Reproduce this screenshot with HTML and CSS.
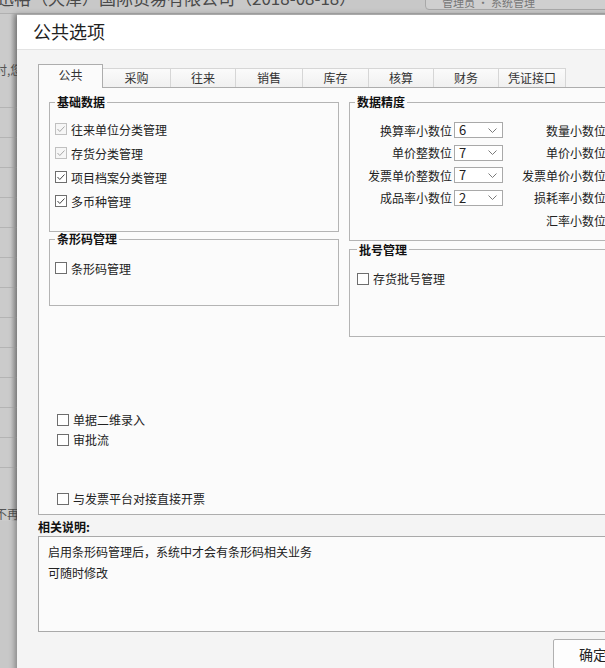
FILE: index.html
```html
<!DOCTYPE html>
<html>

<head>
    <meta charset="utf-8">
    <link rel="stylesheet" href="styles.css">
</head>

<body>
    <div class="app">
        <div class="app-top">
            <span class="company">迅裕（天津）国际贸易有限公司（2018-08-18）</span>
            <div class="user-box">管理员 · 系统管理</div>
        </div>
        <div class="app-side">
            <div class="side-head"><span class="side-text">时,您</span></div>
            <div class="side-row"></div>
            <div class="side-row"></div>
            <div class="side-row"></div>
            <div class="side-row"></div>
            <div class="side-row"></div>
            <div class="side-row"></div>
            <div class="side-row"></div>
            <div class="side-row"></div>
            <div class="side-row"></div>
            <div class="side-row"></div>
            <div class="side-row"></div>
            <div class="side-row"></div>
            <div class="side-foot"><span class="side-text">不再</span></div>
        </div>
    </div>

    <div class="dialog">
        <div class="dlg-title">公共选项</div>
        <div class="dlg-body">
            <div class="tabs">
                <div class="tab active w64">公共</div>
                <div class="tab w68">采购</div>
                <div class="tab w65">往来</div>
                <div class="tab w67">销售</div>
                <div class="tab w66">库存</div>
                <div class="tab w65">核算</div>
                <div class="tab w65">财务</div>
                <div class="tab w67">凭证接口</div>
            </div>
            <div class="tab-panel">
                <div class="cols">
                    <div class="col-left">
                        <fieldset class="group g-basic">
                            <legend>基础数据</legend>
                            <label class="chk disabled"><span class="box"><svg width="10" height="10" viewBox="0 0 10 10"><polyline points="1.5,5 3.8,7.5 8.5,2.5" /></svg></span>往来单位分类管理</label>
                            <label class="chk disabled"><span class="box"><svg width="10" height="10" viewBox="0 0 10 10"><polyline points="1.5,5 3.8,7.5 8.5,2.5" /></svg></span>存货分类管理</label>
                            <label class="chk"><span class="box"><svg width="10" height="10" viewBox="0 0 10 10"><polyline points="1.5,5 3.8,7.5 8.5,2.5" /></svg></span>项目档案分类管理</label>
                            <label class="chk"><span class="box"><svg width="10" height="10" viewBox="0 0 10 10"><polyline points="1.5,5 3.8,7.5 8.5,2.5" /></svg></span>多币种管理</label>
                        </fieldset>
                        <fieldset class="group g-barcode">
                            <legend>条形码管理</legend>
                            <label class="chk"><span class="box"></span>条形码管理</label>
                        </fieldset>
                    </div>
                    <div class="col-right">
                        <fieldset class="group g-precision">
                            <legend>数据精度</legend>
                            <div class="prec-grid">
                                <span class="lbl">换算率小数位</span>
                                <span class="sel">6<svg width="9" height="5" viewBox="0 0 9 5"><polyline points="0.5,0.5 4.5,4.5 8.5,0.5" /></svg></span>
                                <span class="lbl">数量小数位</span>

                                <span class="lbl">单价整数位</span>
                                <span class="sel">7<svg width="9" height="5" viewBox="0 0 9 5"><polyline points="0.5,0.5 4.5,4.5 8.5,0.5" /></svg></span>
                                <span class="lbl">单价小数位</span>

                                <span class="lbl">发票单价整数位</span>
                                <span class="sel">7<svg width="9" height="5" viewBox="0 0 9 5"><polyline points="0.5,0.5 4.5,4.5 8.5,0.5" /></svg></span>
                                <span class="lbl">发票单价小数位</span>

                                <span class="lbl">成品率小数位</span>
                                <span class="sel">2<svg width="9" height="5" viewBox="0 0 9 5"><polyline points="0.5,0.5 4.5,4.5 8.5,0.5" /></svg></span>
                                <span class="lbl">损耗率小数位</span>

                                <span></span>
                                <span></span>
                                <span class="lbl">汇率小数位</span>
                            </div>
                        </fieldset>
                        <fieldset class="group g-batch">
                            <legend>批号管理</legend>
                            <label class="chk"><span class="box"></span>存货批号管理</label>
                        </fieldset>
                    </div>
                </div>
                <div class="extra">
                    <label class="chk"><span class="box"></span>单据二维录入</label>
                    <label class="chk"><span class="box"></span>审批流</label>
                </div>
                <div class="extra extra-last">
                    <label class="chk"><span class="box"></span>与发票平台对接直接开票</label>
                </div>
            </div>

            <div class="note-title">相关说明:</div>
            <div class="note-box">启用条形码管理后，系统中才会有条形码相关业务<br>可随时修改</div>
            <div class="footer">
                <button class="btn">确定</button>
            </div>
        </div>
    </div>
</body>

</html>
```

FILE: styles.css
```css
body {
    margin: 0;
    width: 605px;
    height: 668px;
    overflow: hidden;
    position: relative;
    background: #c8c8c8;
    font-family: "Noto Sans CJK SC", "Noto Sans", sans-serif;
    font-size: 12px;
    color: #222;
}

/* 背后的主界面 */
.app-top {
    height: 13px;
    border-bottom: 1px solid #b0b0b0;
    display: flex;
    overflow: hidden;
}

.company {
    font-size: 17px;
    line-height: 20px;
    margin-top: -12px;
    margin-left: -3px;
    color: #4a4a4a;
    white-space: nowrap;
}

.user-box {
    margin-left: auto;
    margin-right: -12px;
    margin-top: -2px;
    width: 190px;
    height: 10px;
    border: 1px solid #a8a8a8;
    border-radius: 0 0 0 4px;
    background: #cfcfcf;
    color: #777;
    font-size: 11px;
    line-height: 6px;
    text-indent: 16px;
    overflow: hidden;
}

.app-side {
    width: 17px;
    overflow: hidden;
    background: linear-gradient(to right, #cbcbcb 60%, #a9a9a9);
}

.side-head {
    height: 93px;
    border-bottom: 1px solid #b4b4b4;
}

.side-row {
    height: 29px;
    border-bottom: 1px solid #b4b4b4;
}

.side-head .side-text {
    display: block;
    padding-top: 49px;
}

.side-foot {
    padding-top: 39px;
}

.side-text {
    display: block;
    margin-left: -5px;
    white-space: nowrap;
    line-height: 14px;
    color: #555;
}

/* 对话框 */
.dialog {
    position: absolute;
    left: 17px;
    top: 15px;
    width: 637px;
    height: 700px;
    background: #f4f4f4;
    box-shadow: -2px 0 6px rgba(0, 0, 0, 0.35);
}

.dlg-title {
    height: 34px;
    line-height: 32px;
    padding-left: 16px;
    font-size: 18px;
    color: #222;
    background: #fff;
    border-bottom: 1px solid #e3e3e3;
}

.dlg-body {
    padding: 15px 21px 0;
}

.tabs {
    display: flex;
    align-items: flex-end;
    height: 22px;
    position: relative;
    z-index: 1;
}

.tab {
    height: 18px;
    line-height: 17px;
    text-align: center;
    border: 1px solid #d6d6d6;
    border-bottom: none;
    border-left: none;
    background: linear-gradient(#fbfbfb, #f0f0f0);
    color: #333;
}

.tab.active {
    height: 23px;
    line-height: 20px;
    margin-bottom: -1px;
    border: 1px solid #adadad;
    border-bottom: none;
    background: #fbfbfb;
}

.w64 { width: 63px; }
.w65 { width: 64px; }
.w66 { width: 65px; }
.w67 { width: 66px; }
.w68 { width: 67px; }

.tab-panel {
    box-sizing: border-box;
    height: 428px;
    border: 1px solid #adadad;
    background: #fbfbfb;
    padding: 7px 10px 0;
}

.cols {
    display: flex;
    gap: 10px;
}

.col-left {
    width: 290px;
}

.col-right {
    width: 273px;
}

.group {
    margin: 0;
    border: 1px solid #b4b4b4;
    padding: 0 5px;
    min-width: 0;
}

.group legend {
    font-weight: bold;
    line-height: 14px;
    padding: 0 2px;
    margin-left: 0;
    color: #111;
}

.g-basic {
    padding-top: 8px;
    padding-bottom: 18px;
}

.g-barcode {
    padding-top: 10px;
    padding-bottom: 25px;
}

.g-precision {
    padding: 10px 0 8px 5px;
    margin-bottom: 2px;
}

.g-batch {
    padding-left: 7px;
    padding-top: 10px;
    padding-bottom: 45px;
}

/* 复选框 */
.chk {
    display: flex;
    align-items: center;
    height: 24px;
    gap: 4px;
    color: #222;
}

.box {
    box-sizing: border-box;
    width: 12px;
    height: 12px;
    border: 1px solid #6e6e6e;
    background: #fff;
    display: flex;
    align-items: center;
    justify-content: center;
}

.box polyline {
    fill: none;
    stroke: #444;
    stroke-width: 1;
}

.chk.disabled .box {
    border-color: #c0c0c0;
    background: #f6f6f6;
}

.chk.disabled .box polyline {
    stroke: #a8a8a8;
}

/* 数据精度 */
.prec-grid {
    display: grid;
    grid-template-columns: 97px 49px 101px;
    grid-auto-rows: 22.5px;
    column-gap: 2px;
    align-items: center;
}

.lbl {
    text-align: right;
    white-space: nowrap;
}

.sel {
    box-sizing: border-box;
    height: 16px;
    line-height: 14px;
    border: 1px solid #a9a9a9;
    background: #fff;
    padding: 0 5px 0 4px;
    display: flex;
    align-items: center;
    justify-content: space-between;
    font-size: 13px;
}

.sel polyline {
    fill: none;
    stroke: #7a7a7a;
    stroke-width: 1;
}

.extra {
    padding-left: 8px;
    margin-top: 73px;
}

.extra .chk {
    height: 20px;
}

.extra-last {
    margin-top: 39px;
}

/* 相关说明 */
.note-title {
    margin-top: 5px;
    font-weight: bold;
    line-height: 14px;
    color: #111;
}

.note-box {
    box-sizing: border-box;
    height: 96px;
    margin-top: 2px;
    border: 1px solid #a9a9a9;
    background: #fbfbfb;
    padding: 4px 9px;
    line-height: 21px;
    color: #222;
}

.footer {
    display: flex;
    justify-content: flex-end;
    margin-top: 7px;
}

.btn {
    width: 80px;
    height: 30px;
    border: 1px solid #b0b0b0;
    border-radius: 2px;
    background: #fdfdfd;
    font-family: inherit;
    font-size: 14px;
    color: #222;
}
```
